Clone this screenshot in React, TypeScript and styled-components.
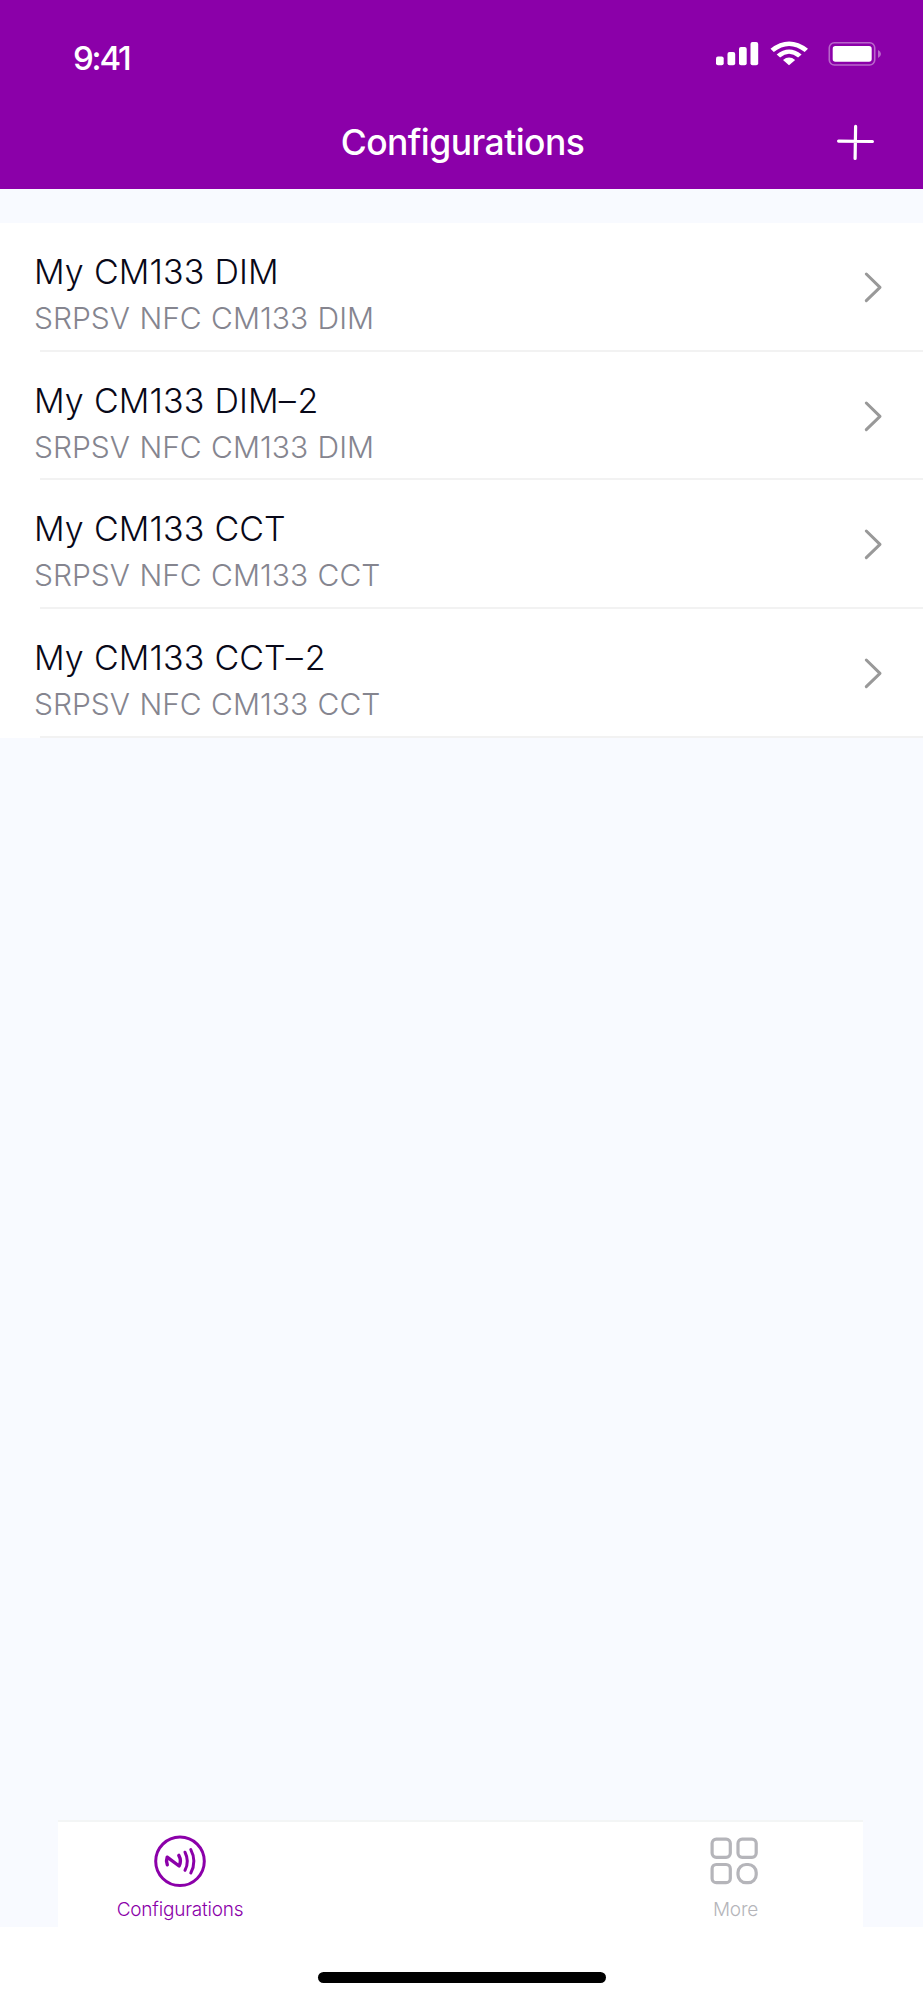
import React from "react";
import styled, { createGlobalStyle } from "styled-components";

const purple = "#8b00a9";

const GlobalStyle = createGlobalStyle`
  * { box-sizing: border-box; }
  body { margin: 0; background: #fff; font-family: Inter, "Liberation Sans", sans-serif; }
`;

const Screen = styled.div`
  width: 923px;
  height: 2000px;
  display: flex;
  flex-direction: column;
  overflow: hidden;
  background: #fff;
`;

const Header = styled.header`
  height: 189px;
  background: ${purple};
  color: #fff;
  flex: none;
`;

const StatusBar = styled.div`
  height: 94px;
  padding: 38px 40px 0 73px;
  display: flex;
  justify-content: space-between;
  align-items: flex-start;
`;

const Time = styled.span`
  font-size: 33px;
  line-height: 40px;
  font-weight: 500;
  letter-spacing: -2.2px;
`;

const StatusIcons = styled.svg`
  width: 170px;
  height: 32px;
  display: block;
`;

const NavBar = styled.div`
  height: 95px;
  padding: 0 48px;
  display: grid;
  grid-template-columns: 40px 1fr 40px;
  align-items: center;
`;

const Title = styled.h1`
  grid-column: 2;
  margin: 0;
  padding: 2px 0 0 2px;
  text-align: center;
  font-size: 35.5px;
  line-height: 44px;
  font-weight: 500;
  letter-spacing: -0.55px;
`;

const AddButton = styled.button`
  border: 0;
  padding: 0;
  background: none;
  width: 40px;
  height: 40px;
  svg { display: block; }
`;

const Content = styled.main`
  flex: 1;
  padding-top: 34px;
  background: #f8faff;
`;

const List = styled.ul`
  margin: 0;
  padding: 0;
  list-style: none;
  background: #fff;
`;

const Row = styled.li`
  height: 128.7px;
  padding-left: 34px;
  display: flex;
  flex-direction: column;
`;

const RowBody = styled.div`
  flex: 1;
  display: flex;
  justify-content: space-between;
  padding-right: 40px;
`;

const RowText = styled.div`
  padding-top: 27px;
`;

const RowTitle = styled.div`
  font-size: 34px;
  line-height: 44px;
  font-weight: 300;
  letter-spacing: 0.1px;
  word-spacing: 0.4px;
  color: #080818;
  white-space: nowrap;
`;

const Suffix = styled.span`
  letter-spacing: 1.8px;
`;

const RowSubtitle = styled.div`
  font-size: 30px;
  line-height: 40px;
  margin-top: 4px;
  font-weight: 300;
  word-spacing: 1px;
  color: #85858f;
  white-space: nowrap;
`;

const Chevron = styled.svg`
  width: 20px;
  height: 32px;
  margin-top: 48px;
`;

const Divider = styled.div`
  height: 2px;
  margin-left: 5.5px;
  background: #f2f2f2;
`;

const TabArea = styled.div`
  padding: 0 60px 0 58px;
  background: #f8faff;
`;

const TabBar = styled.nav`
  height: 107px;
  border-top: 2px solid #f3f5f5;
  background: #fff;
  display: flex;
  justify-content: space-between;
  padding: 12px 92.5px 0 57px;
`;

const Tab = styled.div<{ $active?: boolean; $width: number }>`
  width: ${(p) => p.$width}px;
  display: flex;
  flex-direction: column;
  align-items: center;
  color: ${(p) => (p.$active ? purple : "#b5b5ba")};
  svg { display: block; flex: none; }
`;

const TabLabel = styled.span`
  margin-top: 9px;
  font-size: 19px;
  line-height: 26px;
  font-weight: 300;
  letter-spacing: -0.2px;
  white-space: nowrap;
`;

const HomeArea = styled.footer`
  height: 73px;
  flex: none;
  display: flex;
  justify-content: center;
  padding-top: 45px;
`;

const HomeIndicator = styled.div`
  width: 288px;
  height: 11px;
  border-radius: 6px;
  background: #000;
`;

const configurations = [
  { name: "My CM133 DIM", suffix: "", model: "SRPSV NFC CM133 DIM" },
  { name: "My CM133 DIM", suffix: "–2", model: "SRPSV NFC CM133 DIM" },
  { name: "My CM133 CCT", suffix: "", model: "SRPSV NFC CM133 CCT" },
  { name: "My CM133 CCT", suffix: "–2", model: "SRPSV NFC CM133 CCT" },
];

export default function App() {
  return (
    <Screen>
      <GlobalStyle />
      <Header>
        <StatusBar>
          <Time>9:41</Time>
          <StatusIcons viewBox="713 38 170 32" fill="#fff">
            <rect x="716" y="56.5" width="7.7" height="8.7" rx="2" />
            <rect x="727.5" y="52" width="7.7" height="13.2" rx="2" />
            <rect x="739" y="47" width="7.7" height="18.2" rx="2" />
            <rect x="750.5" y="42" width="7.7" height="23.2" rx="2" />
            <path d="M770.5 48.7Q789 34.3 808 48.7L804.7 52Q789 39.8 773.8 52Z" />
            <path d="M776.7 54.4Q789 44.6 801.6 54.4L798.1 57.5Q789 50.2 780.1 57.5Z" />
            <path d="M783 60Q789 55.2 795.2 60L789 65.2Z" />
            <rect x="829.3" y="42.8" width="45.4" height="22.2" rx="5" fill="none" stroke="#fff" strokeOpacity=".4" strokeWidth="1.6" />
            <rect x="832.7" y="46" width="39" height="15.7" rx="2.7" />
            <path d="M878 50Q881 51.5 881 54T878 58Z" fillOpacity=".4" />
          </StatusIcons>
        </StatusBar>
        <NavBar>
          <Title>Configurations</Title>
          <AddButton aria-label="Add">
            <svg width="40" height="40" viewBox="0 0 40 40" stroke="#fff" strokeWidth="3.2" strokeLinecap="round">
              <path d="M3.6 19.1L37.4 19.5M20.6 4.4L20.1 36.4" />
            </svg>
          </AddButton>
        </NavBar>
      </Header>
      <Content>
        <List>
          {configurations.map((c) => (
            <Row key={c.name + c.suffix}>
              <RowBody>
                <RowText>
                  <RowTitle>
                    {c.name}
                    {c.suffix && <Suffix>{c.suffix}</Suffix>}
                  </RowTitle>
                  <RowSubtitle>{c.model}</RowSubtitle>
                </RowText>
                <Chevron viewBox="0 0 20 32" fill="none" stroke="#999" strokeWidth="3" strokeLinecap="round" strokeLinejoin="round">
                  <path d="M3.3 3L17 16.4L3.3 29.6" />
                </Chevron>
              </RowBody>
              <Divider />
            </Row>
          ))}
        </List>
      </Content>
      <TabArea>
        <TabBar>
          <Tab $active $width={130}>
            <svg width="54" height="54" viewBox="0 0 54 54" fill="none" stroke="currentColor" strokeWidth="3" strokeLinecap="round" strokeLinejoin="round">
              <circle cx="27" cy="27.3" r="24.3" />
              <path strokeWidth="3.4" d="M14.3 30.8C13.3 28 13.3 25.5 14.2 23.2L26.1 32C27.9 28.5 27.7 24.8 25.8 21.4" />
              <path d="M32 18.2C35.3 24.7 35.3 30 32 36.3M37.8 15.6C42 23.5 42 31 37.8 39" />
            </svg>
            <TabLabel>Configurations</TabLabel>
          </Tab>
          <Tab $width={70}>
            <svg width="54" height="54" viewBox="0 0 54 54" fill="none" stroke="currentColor" strokeWidth="3.2">
              <rect x="3.1" y="5.1" width="18.2" height="18.2" rx="4.2" />
              <rect x="29" y="5.1" width="18.2" height="18.2" rx="4.2" />
              <rect x="3.1" y="30.5" width="18.2" height="18.2" rx="4.2" />
              <rect x="29" y="30.5" width="18.2" height="18.2" rx="8" />
            </svg>
            <TabLabel>More</TabLabel>
          </Tab>
        </TabBar>
      </TabArea>
      <HomeArea>
        <HomeIndicator />
      </HomeArea>
    </Screen>
  );
}
